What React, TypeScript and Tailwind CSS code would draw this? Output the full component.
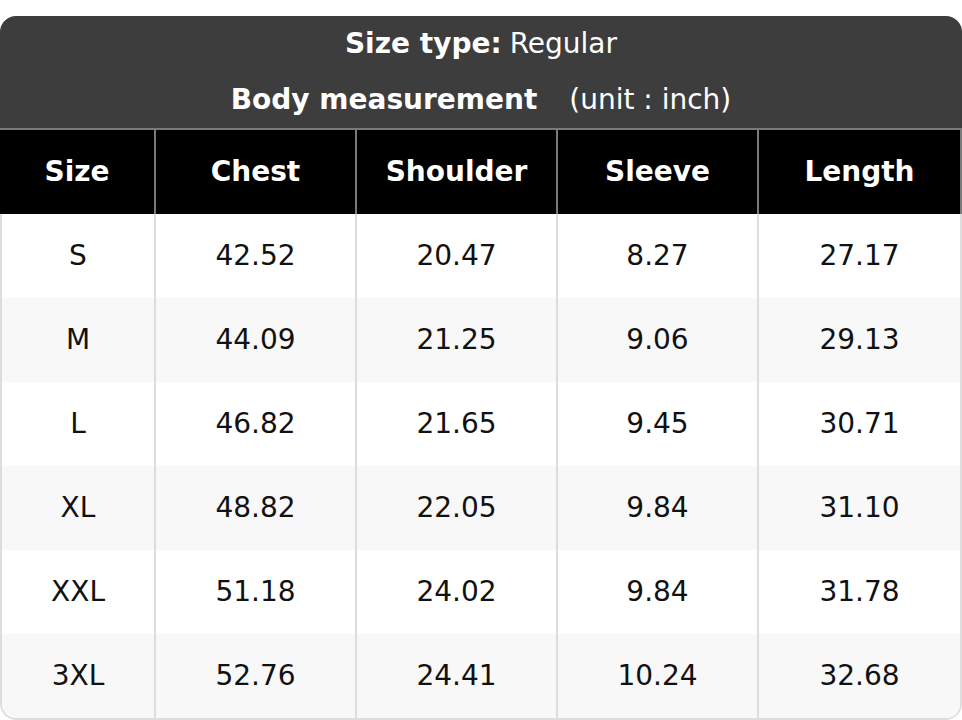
const columns = ['Size', 'Chest', 'Shoulder', 'Sleeve', 'Length'];

const rows = [
  ['S', '42.52', '20.47', '8.27', '27.17'],
  ['M', '44.09', '21.25', '9.06', '29.13'],
  ['L', '46.82', '21.65', '9.45', '30.71'],
  ['XL', '48.82', '22.05', '9.84', '31.10'],
  ['XXL', '51.18', '24.02', '9.84', '31.78'],
  ['3XL', '52.76', '24.41', '10.24', '32.68'],
];

export default function App() {
  return (
    <div className="bg-white w-[962px] h-[720px] pt-4 font-['DejaVu_Sans',sans-serif] text-[28px]">
      <div className="rounded-2xl overflow-hidden">
        {/* title block */}
        <div className="bg-[#3d3d3d] text-white text-center">
          <div className="h-14 flex items-center justify-center">
            <span className="font-bold">Size type:</span>
            <span className="ml-2">Regular</span>
          </div>
          <div className="h-14 flex items-center justify-center">
            <span className="font-bold">Body measurement</span>
            <span className="ml-8">(unit : inch)</span>
          </div>
        </div>

        {/* column headings */}
        <div className="grid grid-cols-[154px_201px_201px_201px_1fr] bg-black text-white font-bold border-t-2 border-[#7a7a7a]">
          {columns.map((col, i) => (
            <div
              key={col}
              className={`h-[84px] flex items-center justify-center ${
                i > 0 ? 'border-l-2 border-[#7a7a7a]' : ''
              } ${i === columns.length - 1 ? 'border-r-2 border-r-[#7a7a7a]' : ''}`}
            >
              {col}
            </div>
          ))}
        </div>

        {/* measurements */}
        <div className="border-x-2 border-b-2 border-[#dddddd] rounded-b-2xl overflow-hidden text-[#111]">
          {rows.map((row, r) => (
            <div
              key={row[0]}
              className={`grid grid-cols-[152px_201px_201px_201px_1fr] ${r % 2 === 1 ? 'bg-[#f8f8f8]' : 'bg-white'}`}
            >
              {row.map((val, i) => (
                <div
                  key={i}
                  className={`h-[84px] flex items-center justify-center ${
                    i > 0 ? 'border-l-2 border-[#dddddd]' : ''
                  }`}
                >
                  {val}
                </div>
              ))}
            </div>
          ))}
        </div>
      </div>
    </div>
  );
}
